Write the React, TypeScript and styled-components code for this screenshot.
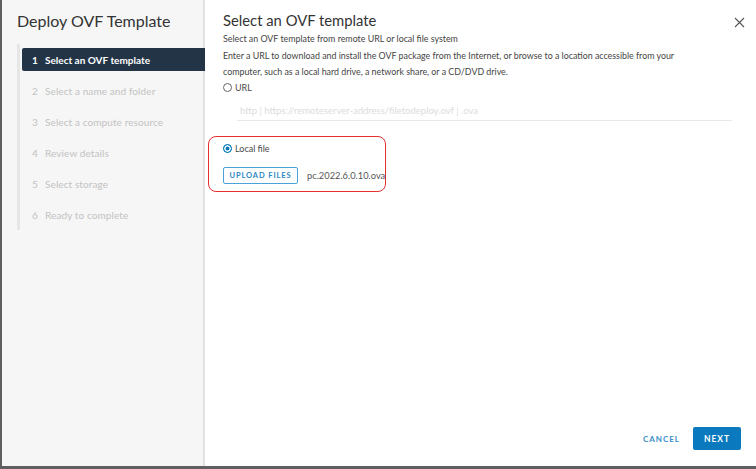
import React from "react";
import styled, { createGlobalStyle } from "styled-components";

const Global = createGlobalStyle`
  html, body { margin: 0; padding: 0; background: #fff; }
  body { font-family: Lato, "Noto Sans", sans-serif; }
  * { box-sizing: border-box; }
`;

const Frame = styled.div`
  width: 756px;
  height: 469px;
  display: flex;
  border-left: 2px solid #5f5f5f;
  border-bottom: 3px solid #5f5f5f;
  overflow: hidden;
  background: #fff;
`;

const Sidebar = styled.aside`
  width: 203px;
  flex: none;
  background: #f6f6f6;
  border-right: 2px solid #e2e2e2;
  padding: 10px 0 0 15px;
  display: flex;
  flex-direction: column;
`;

const SideTitle = styled.h1`
  margin: 0 0 12px 0;
  font-size: 16px;
  font-weight: 400;
  color: #333;
  line-height: 22px;
`;

const StepList = styled.ol`
  list-style: none;
  margin: 0;
  padding: 0;
  border-left: 3px solid #e6e6e6;
  display: flex;
  flex-direction: column;
  margin-right: -2px;
`;

const Step = styled.li`
  height: 31px;
  display: flex;
  align-items: center;
  margin-left: 2px;
`;

const StepInner = styled.div<{ $active?: boolean }>`
  flex: 1;
  height: 23px;
  display: flex;
  align-items: center;
  padding-left: 10px;
  border-radius: 2px 0 0 2px;
  background: ${(p) => (p.$active ? "#233447" : "transparent")};
  color: ${(p) => (p.$active ? "#fff" : "#c2c2c2")};
  font-size: 10px;
  font-weight: ${(p) => (p.$active ? 700 : 400)};
  letter-spacing: ${(p) => (p.$active ? "0" : "0.1px")};
`;

const StepNum = styled.span`
  width: 13px;
`;

const Main = styled.main`
  flex: 1;
  display: flex;
  flex-direction: column;
  padding: 9px 0 0 18px;
`;

const HeaderRow = styled.div`
  display: flex;
  align-items: center;
  justify-content: space-between;
  padding-right: 10px;
`;

const Title = styled.h2`
  margin: 0;
  font-size: 14.8px;
  font-weight: 400;
  color: #333;
  line-height: 22px;
`;

const Close = styled.button`
  border: 0;
  background: none;
  padding: 0;
  width: 14px;
  height: 14px;
  display: flex;
  align-items: center;
  justify-content: center;
  margin-top: 4px;
`;

const Text = styled.p`
  margin: 0;
  font-size: 8.85px;
  line-height: 16.5px;
  color: #444;
`;

const RadioRow = styled.label`
  display: flex;
  align-items: center;
  gap: 3px;
  font-size: 9px;
  color: #4a4a4a;
  height: 14px;
`;

const Radio = styled.span<{ $checked?: boolean }>`
  width: 9px;
  height: 9px;
  border-radius: 50%;
  border: 1px solid ${(p) => (p.$checked ? "#0079b8" : "#666")};
  background: ${(p) => (p.$checked ? "#0079b8" : "#fff")};
  box-shadow: ${(p) => (p.$checked ? "inset 0 0 0 1.5px #fff" : "none")};
`;

const UrlField = styled.div`
  margin: 7px 24px 0 14px;
  border-bottom: 1px solid #e8e8e8;
  height: 19px;
  display: flex;
  align-items: center;
  padding-left: 3px;
  font-size: 9.5px;
  color: #dcdcdc;
`;

const Highlight = styled.section`
  margin: 15px 0 0 -15px;
  width: 178px;
  height: 56px;
  border: 1.3px solid #e0302f;
  border-radius: 8px;
  padding: 5px 0 0 14px;
  display: flex;
  flex-direction: column;
`;

const UploadRow = styled.div`
  display: flex;
  align-items: center;
  gap: 9px;
  margin-top: 11px;
`;

const UploadBtn = styled.button`
  flex: none;
  width: 75px;
  height: 17px;
  border: 1px solid #49a3d9;
  border-radius: 2px;
  background: #fff;
  color: #2b88c4;
  font-family: inherit;
  font-size: 7.5px;
  font-weight: 700;
  letter-spacing: 0.9px;
  padding: 0;
`;

const FileName = styled.span`
  flex: none;
  white-space: nowrap;
  font-size: 9.3px;
  color: #555;
`;

const Footer = styled.div`
  margin-top: auto;
  display: flex;
  justify-content: flex-end;
  align-items: center;
  gap: 13px;
  padding: 0 15px 16px 0;
`;

const CancelBtn = styled.button`
  border: 0;
  background: none;
  color: #3a8fc8;
  font-family: inherit;
  font-size: 8px;
  font-weight: 700;
  letter-spacing: 1px;
  padding: 0;
`;

const NextBtn = styled.button`
  width: 48px;
  height: 23px;
  border: 0;
  border-radius: 2px;
  background: #0a79bd;
  color: #fff;
  font-family: inherit;
  font-size: 8.5px;
  font-weight: 700;
  letter-spacing: 1px;
  padding: 0;
`;

const steps = [
  "Select an OVF template",
  "Select a name and folder",
  "Select a compute resource",
  "Review details",
  "Select storage",
  "Ready to complete",
];

export default function App() {
  return (
    <>
      <Global />
      <Frame>
        <Sidebar>
          <SideTitle>Deploy OVF Template</SideTitle>
          <StepList>
            {steps.map((s, i) => (
              <Step key={s}>
                <StepInner $active={i === 0}>
                  <StepNum>{i + 1}</StepNum>
                  {s}
                </StepInner>
              </Step>
            ))}
          </StepList>
        </Sidebar>
        <Main>
          <HeaderRow>
            <Title>Select an OVF template</Title>
            <Close aria-label="Close">
              <svg width="11" height="11" viewBox="0 0 11 11">
                <path d="M1 1L10 10M10 1L1 10" stroke="#555" strokeWidth="1.1" />
              </svg>
            </Close>
          </HeaderRow>
          <Text>Select an OVF template from remote URL or local file system</Text>
          <Text>
            Enter a URL to download and install the OVF package from the Internet, or browse to a location accessible from your
            <br />
            computer, such as a local hard drive, a network share, or a CD/DVD drive.
          </Text>
          <RadioRow>
            <Radio />
            URL
          </RadioRow>
          <UrlField>http | https://remoteserver-address/filetodeploy.ovf | .ova</UrlField>
          <Highlight>
            <RadioRow>
              <Radio $checked />
              Local file
            </RadioRow>
            <UploadRow>
              <UploadBtn>UPLOAD FILES</UploadBtn>
              <FileName>pc.2022.6.0.10.ova</FileName>
            </UploadRow>
          </Highlight>
          <Footer>
            <CancelBtn>CANCEL</CancelBtn>
            <NextBtn>NEXT</NextBtn>
          </Footer>
        </Main>
      </Frame>
    </>
  );
}
